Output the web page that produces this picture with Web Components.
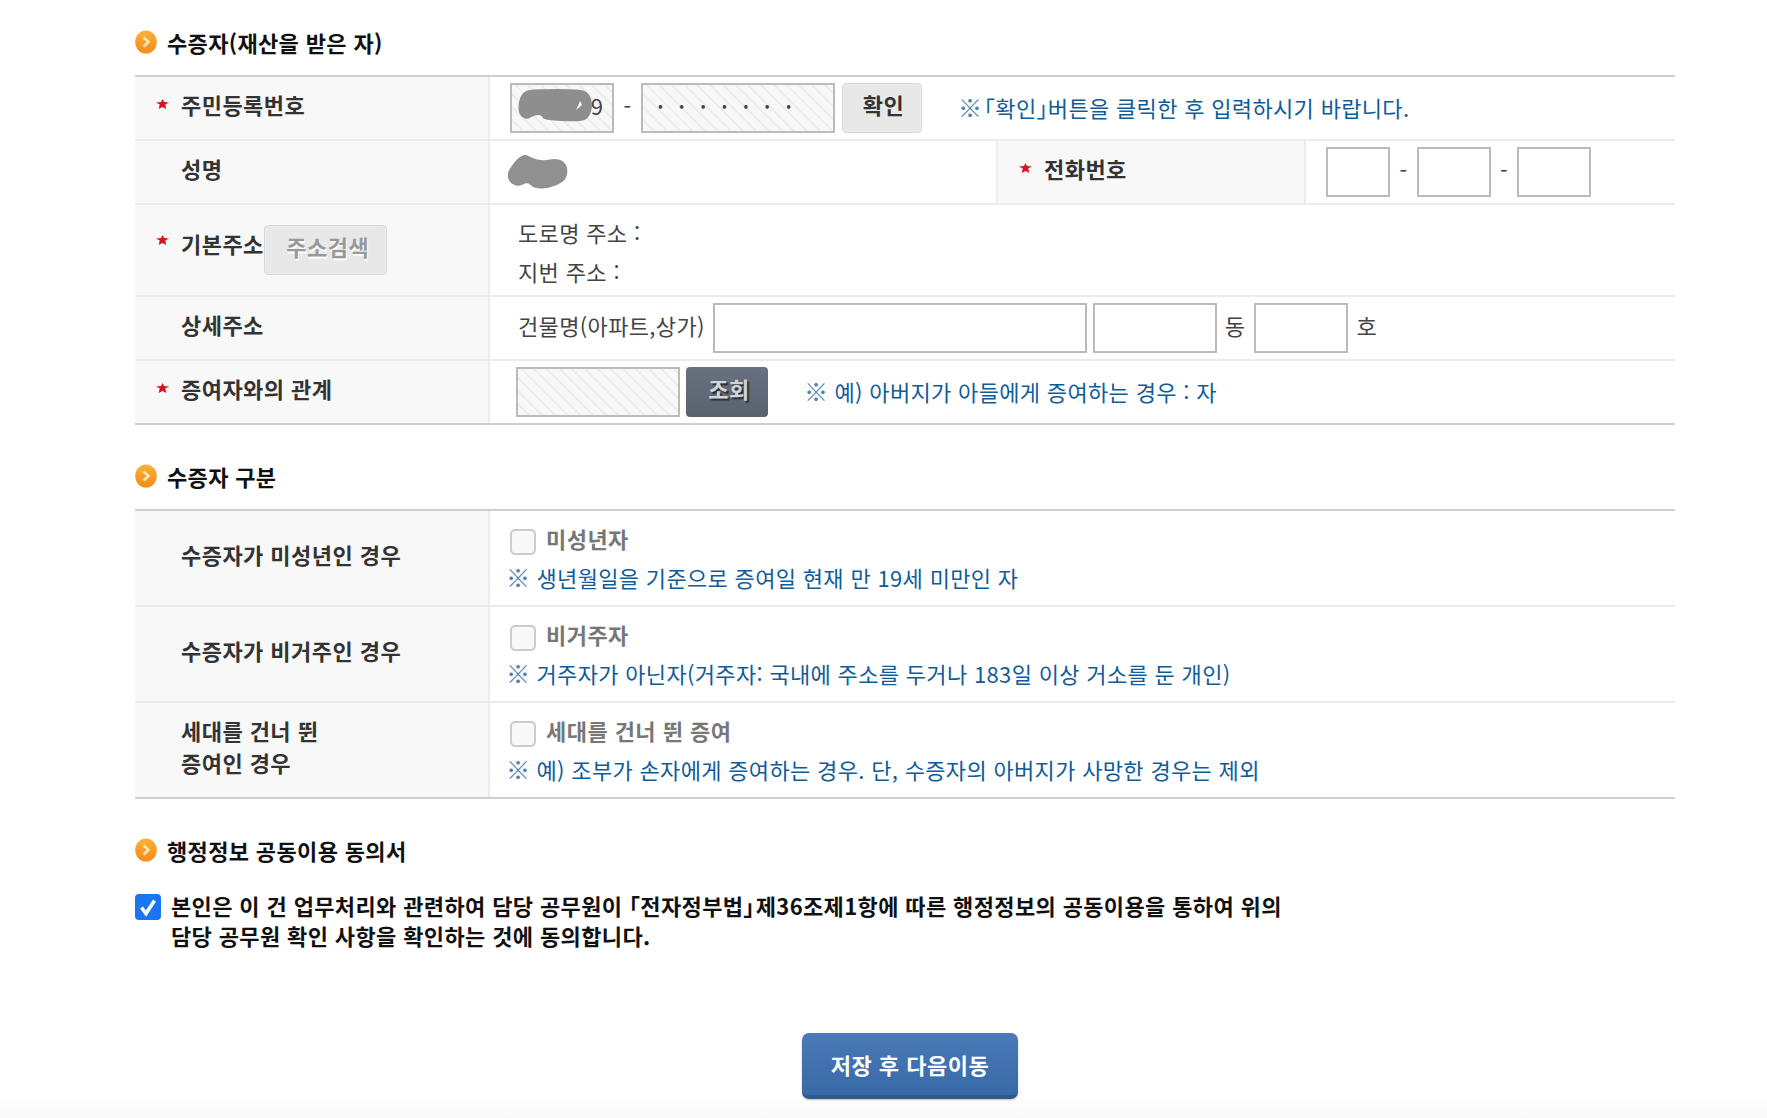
<!DOCTYPE html>
<html lang="ko">
<head>
<meta charset="utf-8">
<title>수증자</title>
<style>
html,body{margin:0;padding:0;background:#fff}
body{font-family:"Noto Sans CJK KR","Noto Sans",sans-serif;font-size:22px;color:#444;height:1118px;overflow:hidden;background:linear-gradient(to bottom,#fff 1090px,#fafafa 1118px)}
</style>
</head>
<body>
<form-page>
  <form-section heading="수증자(재산을 받은 자)">
    <form-table>
      <form-row>
        <form-th required>주민등록번호</form-th>
        <form-td>
          <ssn-front></ssn-front>
          <dash-sep></dash-sep>
          <text-box hatched value="•••••••" mode="dots" style="width:194px"></text-box>
          <ui-button style="width:80px;margin-left:7px">확인</ui-button>
          <hint-note style="margin-left:36px;margin-bottom:3px"><ref-mark>※</ref-mark><half-br style="margin-left:2px">「</half-br>확인<half-br>」</half-br>버튼을 클릭한 후 입력하시기 바랍니다.</hint-note>
        </form-td>
      </form-row>
      <form-row cols="355px 506px 310px 1fr">
        <form-th>성명</form-th>
        <form-td><blot-mark w="62" h="36" color="#909090" points="1,19 7,10 12,4 19,0 26,4 37,7 51,4 60,9 62,19 58,28 41,35 27,34 22,28 12,33 3,28" style="margin-left:-4px"></blot-mark></form-td>
        <form-th required side>전화번호</form-th>
        <form-td style="--pl:20px">
          <text-box style="width:64px"></text-box>
          <dash-sep></dash-sep>
          <text-box style="width:74px"></text-box>
          <dash-sep style="width:26px"></dash-sep>
          <text-box style="width:74px"></text-box>
        </form-td>
      </form-row>
      <form-row tall>
        <form-th required address>기본주소<ui-button variant="muted" slot="after" style="width:123px">주소검색</ui-button></form-th>
        <form-td style="--pl:28px">
          <addr-lines>
            <span>도로명 주소 :</span>
            <span>지번 주소 :</span>
          </addr-lines>
        </form-td>
      </form-row>
      <form-row>
        <form-th>상세주소</form-th>
        <form-td style="--pl:28px">
          <cell-text>건물명(아파트,상가)</cell-text>
          <text-box style="width:374px;margin-left:8px"></text-box>
          <text-box style="width:124px;margin-left:6px"></text-box>
          <cell-text style="margin-left:8px">동</cell-text>
          <text-box style="width:94px;margin-left:9px"></text-box>
          <cell-text style="margin-left:8px">호</cell-text>
        </form-td>
      </form-row>
      <form-row last>
        <form-th required>증여자와의 관계</form-th>
        <form-td style="--pl:26px">
          <text-box hatched style="width:164px"></text-box>
          <ui-button variant="dark" style="width:82px;margin-left:6px">조회</ui-button>
          <hint-note style="margin-left:36px;margin-bottom:3px"><ref-mark>※</ref-mark> 예) 아버지가 아들에게 증여하는 경우 : 자</hint-note>
        </form-td>
      </form-row>
    </form-table>
  </form-section>

  <form-section heading="수증자 구분">
    <form-table>
      <form-row tall2>
        <form-th>수증자가 미성년인 경우</form-th>
        <form-td><check-note label="미성년자"><ref-mark>※</ref-mark> 생년월일을 기준으로 증여일 현재 만 19세 미만인 자</check-note></form-td>
      </form-row>
      <form-row tall2>
        <form-th>수증자가 비거주인 경우</form-th>
        <form-td><check-note label="비거주자"><ref-mark>※</ref-mark> 거주자가 아닌자(거주자: 국내에 주소를 두거나 183일 이상 거소를 둔 개인)</check-note></form-td>
      </form-row>
      <form-row tall2 last>
        <form-th multiline>세대를 건너 뛴<br>증여인 경우</form-th>
        <form-td><check-note label="세대를 건너 뛴 증여"><ref-mark>※</ref-mark> 예) 조부가 손자에게 증여하는 경우. 단, 수증자의 아버지가 사망한 경우는 제외</check-note></form-td>
      </form-row>
    </form-table>
  </form-section>

  <form-section heading="행정정보 공동이용 동의서">
    <consent-box>본인은 이 건 업무처리와 관련하여 담당 공무원이 <half-br>「</half-br>전자정부법<half-br>」</half-br><half-br style="font-size:2px;line-height:0"> </half-br>제36조제1항에 따른 행정정보의 공동이용을 통하여 위의<br>담당 공무원 확인 사항을 확인하는 것에 동의합니다.</consent-box>
  </form-section>

  <save-bar><ui-button variant="primary" style="width:216px">저장 후 다음이동</ui-button></save-bar>
</form-page>

<script>
const FONT='"Noto Sans CJK KR","Noto Sans",sans-serif';
function def(name,css,html,extra){
  class C extends HTMLElement{
    constructor(){super();const s=this.attachShadow({mode:'open'});
      this._html=html;this._css=css;
      if(typeof html!=='function')s.innerHTML='<style>'+css+'</style>'+html;}
    connectedCallback(){
      if(typeof this._html==='function'&&!this._r){this._r=1;this.shadowRoot.innerHTML='<style>'+this._css+'</style>'+this._html(this);}
      if(extra&&!this._d){this._d=1;extra(this);}
    }
  }
  customElements.define(name,C);
}
const HATCH='repeating-linear-gradient(45deg,#f8f8f8 0 7px,#ededed 7px 9px)';
def('form-page',':host{display:block;padding:25px 92px 0 135px;box-sizing:border-box;width:1767px}','<slot></slot>');
def('form-section',`
  :host{display:block;margin-bottom:34px}
  .h{display:flex;align-items:center;height:34px;margin-bottom:16px;gap:10px;font-size:22px;font-weight:700;color:#111;letter-spacing:.35px}
  svg{display:block;flex:none;margin-bottom:1px}
`,'<div class="h"><svg width="22" height="24" viewBox="0 0 22 24"><defs><linearGradient id="g" x1="0" y1="0" x2="0" y2="1"><stop offset="0" stop-color="#f8b338"/><stop offset="1" stop-color="#f58a18"/></linearGradient></defs><ellipse cx="11" cy="12" rx="10.8" ry="11.6" fill="url(#g)"/><path d="M8.5 7.5 L13.5 12 L8.5 16.5" fill="none" stroke="#fde7b8" stroke-width="2.6"/></svg><span></span></div><slot></slot>',
  el=>{el.shadowRoot.querySelector('.h span').textContent=el.getAttribute('heading');});
def('form-table',':host{display:block;border-top:2px solid #cfcfcf}','<slot></slot>');
def('form-row',`
  :host{display:grid;grid-template-columns:var(--cols,355px 1fr);box-sizing:border-box;height:64px;border-bottom:2px solid #ececec}
  :host([tall]){height:92px}
  :host([tall2]){height:96px}
  :host([last]){border-bottom-color:#cfcfcf}
`,'<slot></slot>',el=>{if(el.hasAttribute('cols'))el.style.setProperty('--cols',el.getAttribute('cols'));});
def('form-th',`
  :host{display:flex;align-items:center;background:#f8f8f8;border-right:2px solid #ececec;box-sizing:border-box;padding:0 0 8px 46px;position:relative;font-weight:600;color:#333;font-size:22px;letter-spacing:.45px;white-space:nowrap}
  :host([side]){border-left:2px solid #ececec;padding-left:46px}
  :host([multiline]){line-height:32px}
  :host([address]){padding-bottom:14px}
  :host([address]) slot[name=after]::slotted(*){margin-bottom:-14px}
  .star{display:none;position:absolute;left:21px;top:50%;margin-top:-9px;filter:blur(.35px)}
  :host([side]) .star{left:21px}
  :host([address]) .star{margin-top:-15px}
  :host([required]) .star{display:block}
`,'<svg class="star" width="13" height="10" viewBox="0 0 13 10"><path d="M6.5 0 L8 3 L13 3.6 L9.2 5.6 L10.4 10 L6.5 8 L2.6 10 L3.8 5.6 L0 3.6 L5 3 Z" fill="#d8141c"/></svg><slot></slot><slot name="after"></slot>');
def('form-td',`
  :host{display:flex;align-items:center;box-sizing:border-box;padding-left:var(--pl,20px);font-size:22px;color:#444;white-space:nowrap;min-width:0;letter-spacing:.35px}
`,'<slot></slot>');
def('cell-text',':host{display:inline-block;margin-bottom:6px;flex:none}','<slot></slot>');
def('half-br',':host{display:inline;font-feature-settings:"halt"}','<slot></slot>');
def('ref-mark',':host{display:inline-block;font-size:24px;line-height:1;font-weight:300;color:#4a83b3;letter-spacing:0}','<slot></slot>');
def('text-box',`
  :host{display:inline-block;height:50px;flex:none}
  input{box-sizing:border-box;width:100%;height:50px;margin:0;border:2px solid #bbb;background:#fff;outline:0;padding:0 10px 6px;font:22px ${FONT};color:#444;border-radius:0}
  :host([hatched]) input{background:${HATCH}}
  :host([mode=dots]) input{font-size:14px;letter-spacing:16.6px;padding-left:15px;color:#444}
`,()=>'<input type="text" readonly aria-label="입력">',el=>{const v=el.getAttribute('value');if(v)el.shadowRoot.querySelector('input').value=v;});
def('ssn-front',`
  :host{display:inline-block;position:relative;width:104px;height:50px;flex:none}
  input{box-sizing:border-box;width:104px;height:50px;margin:0;border:2px solid #bbb;outline:0;padding:0 9px 6px;text-align:right;font:22px ${FONT};color:#444;background:${HATCH}}
  blot-mark{position:absolute;left:8px;top:6px}
`,'<input type="text" readonly value="9" aria-label="주민번호"><blot-mark w="75" h="34" color="#8e8e8e" points="5,2 19,0 62,0 71,4 75,16 71,29 62,33 25,31 24,26 16,26 9,31 1,26 0,14" nick="1"></blot-mark>');
def('blot-mark',':host{display:inline-block;line-height:0;flex:none}svg{display:block}',
  el=>{const w=el.getAttribute('w'),h=el.getAttribute('h');const p=el.getAttribute('points').trim().split(/\s+/).map(s=>s.split(',').map(Number));
    const n=p.length;const mid=(a,b)=>((a[0]+b[0])/2)+' '+((a[1]+b[1])/2);
    let d='M'+mid(p[n-1],p[0]);for(let i=0;i<n;i++){d+=' Q'+p[i][0]+' '+p[i][1]+' '+mid(p[i],p[(i+1)%n]);}d+='Z';
    const nick=el.getAttribute('nick')?'<path d="M62 12 L64 16 L58 21 L60 17Z" fill="#fff"/>':'';
    return `<svg width="${w}" height="${h}" viewBox="0 0 ${w} ${h}"><path d="${d}" fill="${el.getAttribute('color')}"/>${nick}</svg>`;});
def('dash-sep',':host{display:inline-block;width:27px;text-align:center;flex:none;font-size:22px;color:#444;margin-bottom:6px}','-');
def('ui-button',`
  :host{display:inline-flex;flex:none}
  button{width:100%;height:50px;margin:0;padding:0 0 8px 3px;border:1px solid #d8d8d8;border-radius:4px;background:#e8e8e8;box-shadow:inset 0 0 0 1px #ececec;color:#333;font:700 22px ${FONT};letter-spacing:.5px}
  :host([variant=muted]) button{color:#999;text-shadow:1px 2px 1px #fff;padding-left:5px}
  :host([variant=dark]) button{background:linear-gradient(#687180,#58616e);border:0;box-shadow:none;color:#d4d4d4;text-shadow:2px 2px 1px #2a2f38;padding-left:4px}
  :host([variant=primary]) button{height:66px;background:linear-gradient(#4a7ab8,#376aa6);border:0;border-bottom:4px solid #2f5a90;border-radius:7px;color:#fff;font-size:22px;padding:0;box-shadow:0 1px 2px rgba(0,0,0,.25)}
`,'<button type="button"><slot></slot></button>');
def('hint-note',`:host{display:inline-block;color:#0f5c99;font-size:22px;letter-spacing:.33px;white-space:nowrap}`,'<slot></slot>');
def('addr-lines',':host{display:flex;flex-direction:column;line-height:39px;padding-top:4px;color:#444}','<slot></slot>');
def('check-note',`
  :host{display:flex;flex-direction:column;white-space:nowrap;padding-top:2.3px}
  .a{display:flex;align-items:center;height:36px;gap:10px;color:#777;font-weight:600;letter-spacing:.45px}
  .a span{margin-bottom:6px}
  .n{color:#0f5c99;line-height:36px;margin:-.5px 0 0 -4px;letter-spacing:.33px}
  input{appearance:none;-webkit-appearance:none;margin:2px 0 0;width:26px;height:26px;border:2px solid #ccc;border-radius:5px;background:#f8f8f8;box-sizing:border-box}
`,el=>`<div class="a"><input type="checkbox" disabled aria-label="선택"><span>${el.getAttribute('label')}</span></div><div class="n"><slot></slot></div>`);
def('consent-box',`
  :host{display:flex;gap:10px;margin-top:23px;color:#111;font-weight:600;line-height:30px;font-size:22px;white-space:nowrap;letter-spacing:.37px}
  .b{flex:none;position:relative;width:26px;height:26px;margin-top:4px;border-radius:4px;background:#1a75f2}
  svg{display:block}
`,'<div class="b"><svg width="26" height="26" viewBox="0 0 26 26"><path d="M6.5 13.5 L11 19.5 L19.5 6.5" fill="none" stroke="#fff" stroke-width="3.6"/></svg></div><div><slot></slot></div>');
def('save-bar',':host{display:block;margin-left:667px;margin-top:83px}','<slot></slot>');
</script>
</body>
</html>
